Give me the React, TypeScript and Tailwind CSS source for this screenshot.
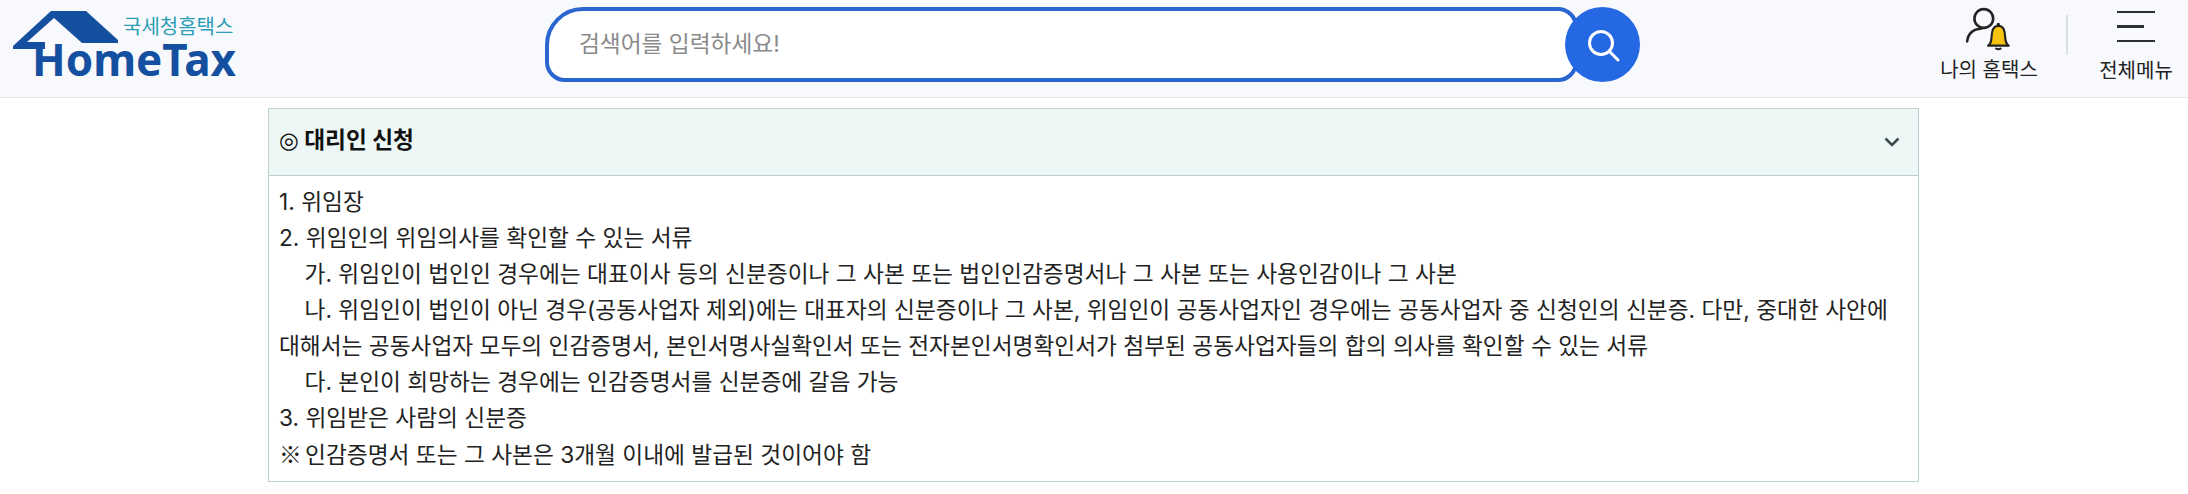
const FONT = "font-['Inter','Noto_Sans_CJK_KR',sans-serif]";

const lines = [
  "1. 위임장",
  "2. 위임인의 위임의사를 확인할 수 있는 서류",
  "\u00a0\u00a0\u00a0\u00a0가. 위임인이 법인인 경우에는 대표이사 등의 신분증이나 그 사본 또는 법인인감증명서나 그 사본 또는 사용인감이나 그 사본",
  "\u00a0\u00a0\u00a0\u00a0나. 위임인이 법인이 아닌 경우(공동사업자 제외)에는 대표자의 신분증이나 그 사본, 위임인이 공동사업자인 경우에는 공동사업자 중 신청인의 신분증. 다만, 중대한 사안에 대해서는 공동사업자 모두의 인감증명서, 본인서명사실확인서 또는 전자본인서명확인서가 첨부된 공동사업자들의 합의 의사를 확인할 수 있는 서류",
  "\u00a0\u00a0\u00a0\u00a0다. 본인이 희망하는 경우에는 인감증명서를 신분증에 갈음 가능",
  "3. 위임받은 사람의 신분증",
];

const Logo = () => (
  <div className="relative w-[240px] h-[97px] shrink-0">
    <svg width="125" height="60" viewBox="0 0 125 60" className="absolute left-0 top-0">
      <path
        d="M13 46 L51 11 H86 L118 40 V43 H82 L54 18 L27 42 H45 V49 H13 Z"
        fill="#14509f"
      />
    </svg>
    <span className="absolute left-[123px] top-[17px] text-[20px] leading-[20px] text-[#2a9db5] whitespace-nowrap">국세청홈택스</span>
    <span className="absolute left-[32px] top-[37px] text-[44px] leading-[44px] font-bold text-[#14509f] font-['Noto_Sans']">HomeTax</span>
  </div>
);

const SearchBox = () => (
  <div className="flex items-center ml-[305px]">
    <div className="w-[1033px] h-[75px] bg-white border-4 border-[#2a66d0] rounded-tl-[38px] rounded-bl-[20px] rounded-r-[20px] flex items-center pl-[30px] -mr-[13px]">
      <span className="text-[22.700px] text-[#8a8a8a]">검색어를 입력하세요!</span>
    </div>
    <div className="relative w-[75px] h-[75px] rounded-full bg-[#2468e4] flex items-center justify-center">
      <svg width="36" height="36" viewBox="0 0 36 36" fill="none" stroke="white" strokeWidth="3">
        <circle cx="16" cy="16" r="11.500" />
        <path d="M24.500 24.500 L33 33" strokeLinecap="round" />
      </svg>
    </div>
  </div>
);

const HeaderActions = () => (
  <div className="ml-auto flex items-start h-full">
    <div className="w-[120px] flex flex-col items-center pt-[7px]">
      <svg width="50" height="46" viewBox="0 0 48 44" fill="none">
        <circle cx="19" cy="11" r="9" stroke="#222" strokeWidth="2.500" />
        <path d="M3 33 C4 24 10 21 17 20.500" stroke="#222" strokeWidth="2.500" strokeLinecap="round" />
        <path
          d="M23 37 C27 35 26 30 27 24 C28 19 31 18 33 18 C35 18 38 19 39 24 C40 30 39 35 43 37 Z"
          fill="#f5c20f"
          stroke="#222"
          strokeWidth="2"
          strokeLinejoin="round"
        />
        <circle cx="33" cy="16.500" r="1.500" fill="#222" />
        <path d="M30.500 39 C31 41 35 41 35.500 39" stroke="#222" strokeWidth="2" />
      </svg>
      <span className="text-[20px] leading-[26px] mt-[4px] text-[#222] whitespace-nowrap">나의 홈택스</span>
    </div>
    <div className="w-[2px] h-[40px] bg-[#dcdfe3] mt-[15px] ml-[17px]" />
    <div className="w-[100px] flex flex-col items-center pt-[11px] ml-[18px] mr-[2px]">
      <div className="flex flex-col items-start h-[31px] w-[38px]">
        <span className="w-[38px] h-[3px] bg-[#2b2f36]" />
        <span className="w-[27px] h-[3px] bg-[#2b2f36] mt-[12px]" />
        <span className="w-[38px] h-[3px] bg-[#2b2f36] mt-[12px]" />
      </div>
      <span className="text-[20px] leading-[26px] text-[#222] mt-[16px] whitespace-nowrap">전체메뉴</span>
    </div>
  </div>
);

export default function App() {
  return (
    <div className={`w-[2188px] h-[494px] bg-white overflow-hidden ${FONT}`}>
      <header className="h-[98px] bg-[#f8f9fd] border-b border-[#e4e5e8] flex">
        <Logo />
        <div className="pt-[7px]">
          <SearchBox />
        </div>
        <HeaderActions />
      </header>
      <div className="w-[1651px] ml-[268px] mt-[10px] border border-[#bcd0d2]">
        <div className="h-[67px] bg-[#edf7f6] border-b border-[#bcd0d2] flex items-center justify-between pl-[10px] pr-[18px] pb-[3px]">
          <span className="text-[22.700px] font-bold text-[#111]">
            <span className="font-['DejaVu_Sans'] font-normal">◎</span> 대리인 신청
          </span>
          <svg width="16" height="10" viewBox="0 0 16 10" fill="none" stroke="#3d4a4d" strokeWidth="2.500" className="mt-[3px]">
            <path d="M1.500 1.500 L8 8 L14.500 1.500" />
          </svg>
        </div>
        <div className="px-[10px] pt-[8px] pb-[8px] text-[22.700px] leading-[36px] text-[#222] break-keep">
          {lines.map((line) => (
            <p key={line}>{line}</p>
          ))}
          <p>
            <span className="font-['Noto_Sans_CJK_KR'] tracking-[-3px]">※</span> 인감증명서 또는 그 사본은 3개월 이내에 발급된 것이어야 함
          </p>
        </div>
      </div>
    </div>
  );
}
